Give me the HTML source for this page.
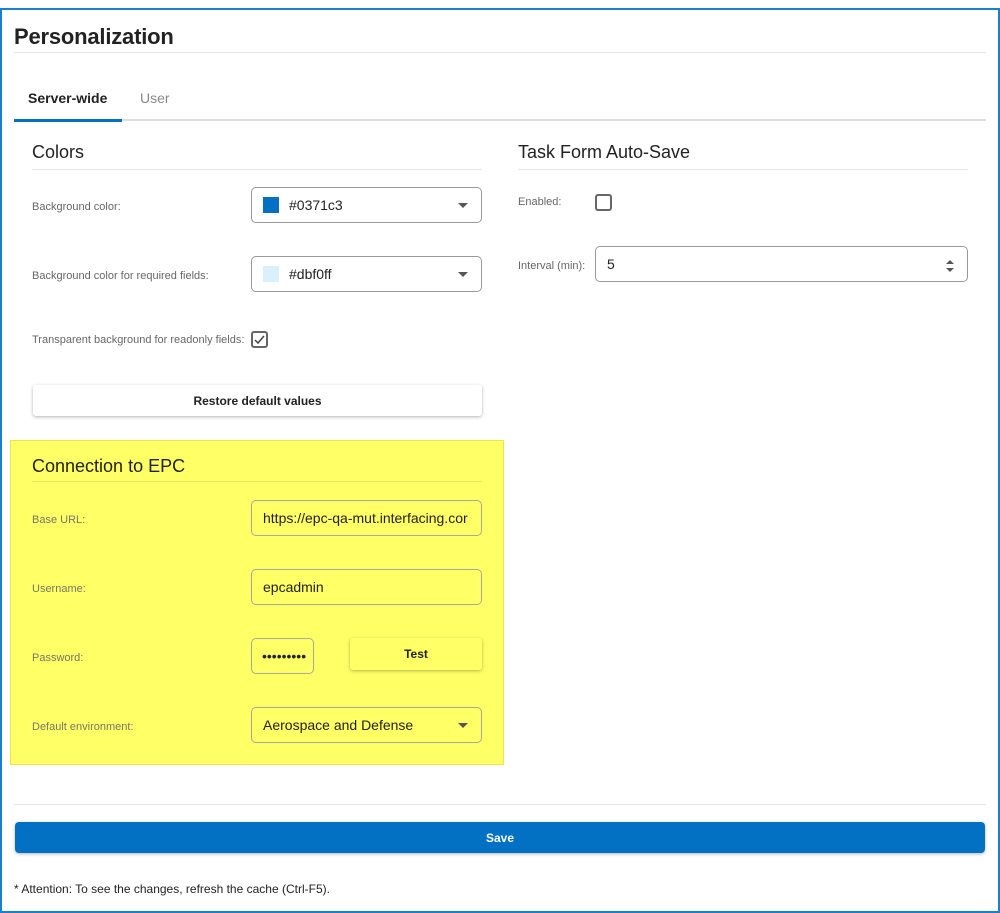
<!DOCTYPE html>
<html><head><meta charset="utf-8"><style>
*{box-sizing:border-box;margin:0;padding:0}
body{width:1000px;height:913px;background:#fff;font-family:"Liberation Sans",sans-serif;position:relative;overflow:hidden;color:#222}
.a{position:absolute}
.frame{left:0;top:8px;width:1000px;height:905px;border:2px solid #1b7fcc}
.lbl{font-size:11px;color:#666}
.inp{border:1px solid #999;border-radius:5px;background:transparent;font-size:14px;color:#222;display:flex;align-items:center;padding-left:11px}
.caret{position:absolute;right:13px;top:50%;margin-top:-2px;border-left:5px solid transparent;border-right:5px solid transparent;border-top:5px solid #555}
.h2{font-size:18px;color:#222}
.hr{height:1px;background:#e6e6e6}
.btn{background:#fff;border-radius:3px;box-shadow:0 1px 3px rgba(0,0,0,.3);font-size:12px;font-weight:bold;display:flex;align-items:center;justify-content:center;color:#222}
.cb{width:17px;height:17px;border:2px solid #666;border-radius:3px}
</style></head><body>
<div class="a frame"></div>
<div class="a" style="left:14px;top:24px;font-size:22px;font-weight:bold;color:#222;letter-spacing:-0.2px">Personalization</div>
<div class="a hr" style="left:14px;top:52px;width:972px"></div>
<div class="a" style="left:28px;top:90px;font-size:14px;font-weight:bold">Server-wide</div>
<div class="a" style="left:140px;top:90px;font-size:14px;color:#888">User</div>
<div class="a" style="left:14px;top:119px;width:972px;height:2px;background:#ddd"></div>
<div class="a" style="left:14px;top:119px;width:108px;height:3px;background:#0371c3"></div>

<div class="a h2" style="left:32px;top:142px">Colors</div>
<div class="a hr" style="left:32px;top:169px;width:450px"></div>
<div class="a lbl" style="left:32px;top:201px">Background color:</div>
<div class="a inp" style="left:251px;top:187px;width:231px;height:36px"><span style="width:16px;height:16px;background:#0371c3;margin-right:10px"></span>#0371c3<span class="caret"></span></div>
<div class="a lbl" style="left:32px;top:270px">Background color for required fields:</div>
<div class="a inp" style="left:251px;top:256px;width:231px;height:36px"><span style="width:16px;height:16px;background:#dbf0ff;margin-right:10px"></span>#dbf0ff<span class="caret"></span></div>
<div class="a lbl" style="left:32px;top:334px">Transparent background for readonly fields:</div>
<div class="a cb" style="left:251px;top:331px"><svg width="13" height="13" viewBox="0 0 13 13" style="display:block"><path d="M2 7l3 3 6-7" stroke="#444" stroke-width="1.5" fill="none"/></svg></div>
<div class="a btn" style="left:33px;top:385px;width:449px;height:31px">Restore default values</div>

<div class="a" style="left:10px;top:440px;width:494px;height:325px;background:#ffff66;border:1px solid #f2e24a"></div>
<div class="a h2" style="left:32px;top:456px">Connection to EPC</div>
<div class="a hr" style="left:32px;top:481px;width:450px;background:#e8e85a"></div>
<div class="a lbl" style="left:32px;top:514px;color:#776">Base URL:</div>
<div class="a inp" style="left:251px;top:500px;width:231px;height:36px;border-color:#aa9;white-space:nowrap;overflow:hidden">https://epc-qa-mut.interfacing.cor</div>
<div class="a lbl" style="left:32px;top:583px;color:#776">Username:</div>
<div class="a inp" style="left:251px;top:569px;width:231px;height:36px;border-color:#aa9">epcadmin</div>
<div class="a lbl" style="left:32px;top:652px;color:#776">Password:</div>
<div class="a inp" style="left:251px;top:638px;width:63px;height:36px;border-color:#aa9;font-size:14px;letter-spacing:0;padding-left:10px;overflow:hidden;white-space:nowrap">•••••••••</div>
<div class="a btn" style="left:350px;top:638px;width:132px;height:32px;background:#ffff66">Test</div>
<div class="a lbl" style="left:32px;top:721px;color:#776">Default environment:</div>
<div class="a inp" style="left:251px;top:707px;width:231px;height:36px;border-color:#aa9">Aerospace and Defense<span class="caret"></span></div>

<div class="a h2" style="left:518px;top:142px">Task Form Auto-Save</div>
<div class="a hr" style="left:518px;top:169px;width:450px"></div>
<div class="a lbl" style="left:518px;top:196px">Enabled:</div>
<div class="a cb" style="left:595px;top:194px"></div>
<div class="a lbl" style="left:518px;top:260px">Interval (min):</div>
<div class="a inp" style="left:595px;top:246px;width:373px;height:36px">5
<svg class="a" style="right:12px;top:12px" width="10" height="14"><path d="M1 5l4-4 4 4z M1 9l4 4 4-4z" fill="#555"/></svg></div>

<div class="a hr" style="left:14px;top:804px;width:972px"></div>
<div class="a" style="left:15px;top:822px;width:970px;height:31px;background:#0371c3;border-radius:4px;box-shadow:0 1px 3px rgba(0,0,0,.3);color:#fff;font-size:12px;font-weight:bold;display:flex;align-items:center;justify-content:center">Save</div>
<div class="a" style="left:14px;top:882px;font-size:12px;color:#222">* Attention: To see the changes, refresh the cache (Ctrl-F5).</div>
</body></html>
